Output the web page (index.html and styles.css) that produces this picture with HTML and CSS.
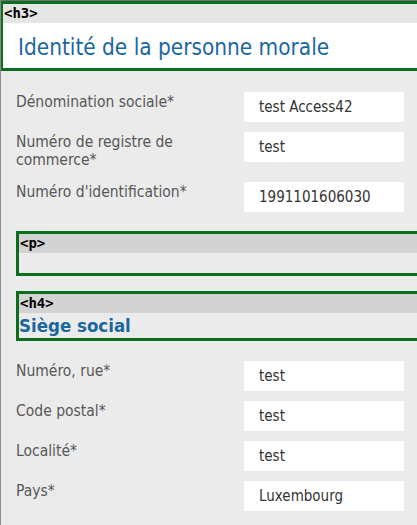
FILE: index.html
```html
<!DOCTYPE html>
<html lang="fr">
<head>
<meta charset="utf-8">
<title>Identité de la personne morale</title>
<link rel="stylesheet" href="styles.css">
</head>
<body>
<div class="frame">
  <div class="hl hl-h3">
    <span class="tag">&lt;h3&gt;</span>
    <h3 class="title">Identité de la personne morale</h3>
  </div>

  <div class="fields fields-first">
    <div class="row">
      <label class="lbl">Dénomination sociale*</label>
      <input class="field" type="text" value="test Access42">
    </div>
    <div class="row">
      <label class="lbl lbl-two">Numéro de registre de commerce*</label>
      <input class="field" type="text" value="test">
    </div>
    <div class="row">
      <label class="lbl">Numéro d'identification*</label>
      <input class="field" type="text" value="1991101606030">
    </div>
  </div>

  <div class="hl hl-p">
    <span class="tag">&lt;p&gt;</span>
    <p class="empty"></p>
  </div>

  <div class="hl hl-h4">
    <span class="tag">&lt;h4&gt;</span>
    <h4 class="sub">Siège social</h4>
  </div>

  <div class="fields fields-second">
    <div class="row">
      <label class="lbl">Numéro, rue*</label>
      <input class="field" type="text" value="test">
    </div>
    <div class="row">
      <label class="lbl">Code postal*</label>
      <input class="field" type="text" value="test">
    </div>
    <div class="row">
      <label class="lbl">Localité*</label>
      <input class="field" type="text" value="test">
    </div>
    <div class="row">
      <label class="lbl">Pays*</label>
      <input class="field" type="text" value="Luxembourg">
    </div>
  </div>
</div>
</body>
</html>
```

FILE: styles.css
```css
html, body {
  margin: 0;
  padding: 0;
}

body {
  background: #ebebeb;
  overflow: hidden;
  font-family: "DejaVu Sans Condensed", "DejaVu Sans", sans-serif;
}

.frame {
  width: 470px;
  height: 524px;
  overflow: hidden;
  border-left: 1px solid #8a8a8a;
  border-top: 1px solid #707070;
}

.hl {
  border: 3px solid #0b6e1c;
}

.hl-h3 {
  margin-left: -1px;
  background: #ffffff;
}

.hl-p {
  margin: 19px 0 0 15px;
}

.hl-h4 {
  margin: 15px 0 0 15px;
}

.tag {
  display: block;
  height: 19px;
  line-height: 19px;
  padding-left: 1px;
  background: rgba(0, 0, 0, 0.1);
  color: #000;
  font-family: "DejaVu Sans Mono", monospace;
  font-weight: bold;
  font-size: 14px;
}

.title {
  margin: 0;
  padding: 11px 15px 8px;
  font-size: 22.4px;
  line-height: 26px;
  font-weight: normal;
  color: #1a679e;
}

.empty {
  margin: 0;
  height: 20px;
}

.sub {
  margin: 0;
  font-size: 18.5px;
  line-height: 25px;
  font-weight: bold;
  color: #1a679e;
}

.fields {
  padding-left: 15px;
}

.fields-first {
  padding-top: 21px;
}

.fields-second {
  padding-top: 20px;
}

.row {
  display: flex;
  align-items: flex-start;
  gap: 28px;
  margin-bottom: 10px;
}

.lbl {
  width: 200px;
  padding-top: 1px;
  font-size: 15.5px;
  line-height: 18px;
  color: #575757;
}

.lbl-two {
  padding-bottom: 3px;
}

.field {
  box-sizing: border-box;
  width: 160px;
  height: 30px;
  margin: 0;
  padding: 0 15px;
  border: none;
  background: #ffffff;
  font-family: "DejaVu Sans Condensed", "DejaVu Sans", sans-serif;
  font-size: 15px;
  color: #333333;
  outline: none;
}
```
